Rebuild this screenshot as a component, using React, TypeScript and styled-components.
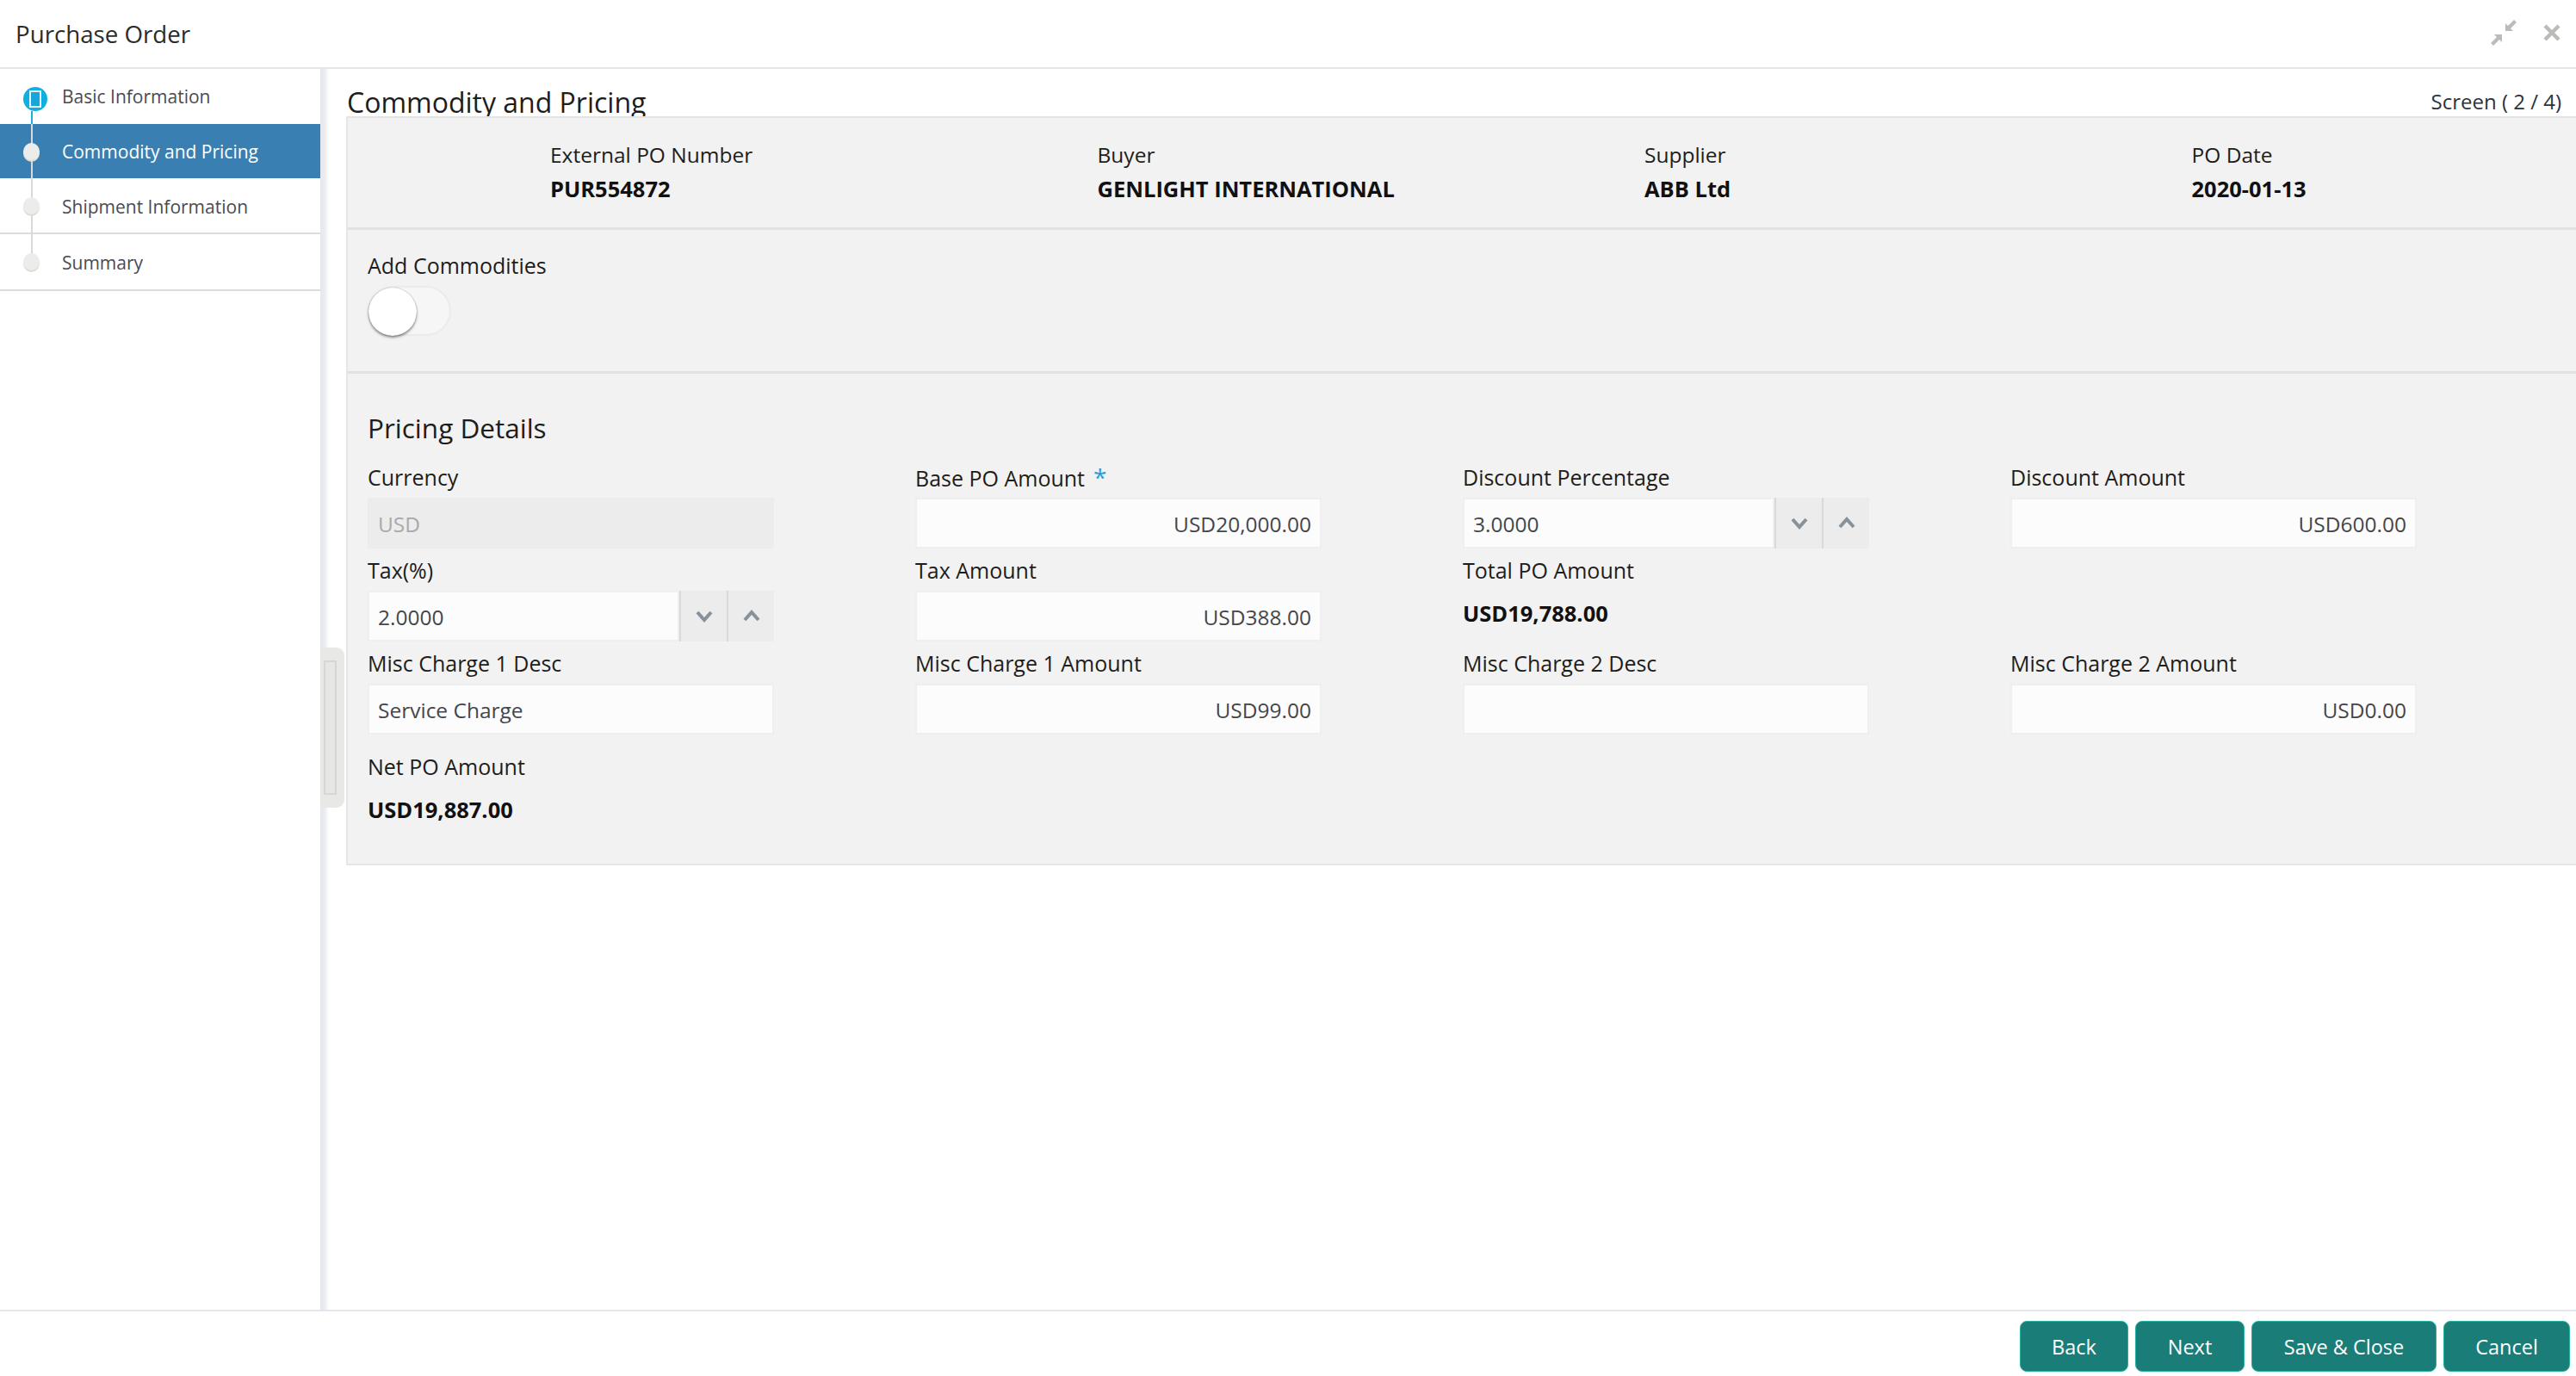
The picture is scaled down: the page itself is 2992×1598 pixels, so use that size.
import React from 'react';
import styled, { createGlobalStyle } from 'styled-components';

const GlobalStyle = createGlobalStyle`
  html, body {
    margin: 0;
    padding: 0;
    background: #fff;
  }
  body {
    font-family: "Open Sans", "Noto Sans", sans-serif;
    color: #1d1d1b;
  }
  * {
    box-sizing: border-box;
  }
`;

const Page = styled.div`
  width: 2992px;
  height: 1598px;
  display: flex;
  flex-direction: column;
  overflow: hidden;
`;

const TopBar = styled.header`
  height: 80px;
  flex: none;
  display: flex;
  align-items: center;
  justify-content: space-between;
  padding: 0 18px 0;
  border-bottom: 2px solid #e3e6ea;
`;

const PageTitle = styled.h1`
  margin: 0;
  font-size: 27.7px;
  font-weight: 400;
  color: #2c2c2a;
`;

const WindowIcons = styled.div`
  display: flex;
  align-items: center;
  gap: 30px;
  margin-top: -2px;
`;

const Body = styled.div`
  flex: 1;
  display: flex;
  min-height: 0;
`;

const Sidebar = styled.nav`
  width: 372px;
  flex: none;
`;

const StepRow = styled.div<{ $active?: boolean; $height: number; $bordered?: boolean }>`
  position: relative;
  height: ${(p) => p.$height}px;
  display: flex;
  align-items: center;
  padding-left: 72px;
  padding-top: ${(p) => (p.$bordered ? 2 : 0)}px;
  font-size: 21px;
  color: ${(p) => (p.$active ? '#fff' : '#4a4a52')};
  background: ${(p) => (p.$active ? '#3a7fb2' : 'transparent')};
  border-bottom: ${(p) => (p.$bordered ? '2px solid #dedcd8' : 'none')};
`;

const StepLine = styled.span<{ $top: number; $length: number; $current?: boolean }>`
  position: absolute;
  left: 36px;
  top: ${(p) => p.$top}px;
  width: 2px;
  height: ${(p) => p.$length}px;
  background: ${(p) => (p.$current ? '#1aafdc' : '#d9d9d7')};
`;

const StepDot = styled.span`
  position: absolute;
  left: 27px;
  top: 50%;
  width: 19px;
  height: 20px;
  margin-top: -10px;
  border-radius: 50%;
  background: #ececea;
  box-shadow: 0 2px 0 #dcdcda;
`;

const CurrentDot = styled.span`
  position: absolute;
  left: 27px;
  top: 21px;
  width: 28px;
  height: 28px;
  border-radius: 50%;
  background: #0fb0e0;
  display: flex;
  align-items: center;
  justify-content: center;

  &::after {
    content: '';
    width: 10px;
    height: 16px;
    background: #1aa5d8;
    border: 2px solid #e8f4f8;
  }
`;

const Splitter = styled.div`
  position: relative;
  width: 30px;
  flex: none;
  background: linear-gradient(to right, #e6e9ec 0, #e9ebed 5px, #fff 10px);
`;

const Handle = styled.div`
  position: absolute;
  left: 0;
  top: 672px;
  width: 28px;
  height: 186px;
  background: #e8e8e6;
  border-radius: 0 9px 9px 0;
  display: flex;
  align-items: center;
  justify-content: center;
  padding-right: 6px;

  &::after {
    content: '';
    width: 11px;
    height: 152px;
    background: #e6e6e4;
    border: 2px solid #d6d6d4;
  }
`;

const Main = styled.main`
  flex: 1;
  min-width: 0;
`;

const ContentHead = styled.div`
  height: 55px;
  display: flex;
  justify-content: space-between;
  padding: 17px 17px 0 1px;
  overflow: hidden;
`;

const ContentTitle = styled.h2`
  margin: 0;
  font-size: 32px;
  line-height: 44px;
  font-weight: 400;
  color: #1d1d1b;
`;

const ScreenCount = styled.span`
  font-size: 24px;
  line-height: 42px;
  color: #2a3340;
`;

const Panel = styled.section`
  height: 870px;
  background: #f2f2f2;
  border-top: 2px solid #e4e4e4;
  border-left: 2px solid #e6e6e6;
  border-bottom: 2px solid #e6e6e6;
`;

const InfoGrid = styled.div`
  height: 130px;
  padding: 23px 0 0 235px;
  display: grid;
  grid-template-columns: repeat(4, 635.5px);
  border-bottom: 3px solid #e1e1e1;
`;

const InfoLabel = styled.div`
  font-size: 24.5px;
  line-height: 40px;
`;

const InfoValue = styled.div`
  font-size: 25.5px;
  line-height: 38px;
  font-weight: 700;
  color: #111;
`;

const ToggleBlock = styled.div`
  height: 167px;
  padding: 21px 0 0 23px;
  border-bottom: 3px solid #e1e1e1;
`;

const ToggleLabel = styled.div`
  font-size: 25px;
  line-height: 40px;
`;

const ToggleTrack = styled.div`
  position: relative;
  margin-top: 4px;
  width: 97px;
  height: 58px;
  border-radius: 29px;
  background: #f6f6f6;
  border: 2px solid #ebebeb;
`;

const ToggleKnob = styled.div`
  position: absolute;
  left: -1px;
  top: 0;
  width: 56px;
  height: 56px;
  border-radius: 50%;
  background: #fff;
  box-shadow: 0 2px 3px rgba(0, 0, 0, 0.45), 0 0 1px rgba(0, 0, 0, 0.4);
`;

const PricingBlock = styled.div`
  padding: 41px 0 0 23px;
`;

const SectionTitle = styled.h3`
  margin: 0 0 13px;
  font-size: 31.5px;
  line-height: 44px;
  font-weight: 400;
  color: #1d1d1b;
`;

const FieldGrid = styled.div`
  display: grid;
  grid-template-columns: repeat(4, 636px);
  grid-auto-rows: 108px;
`;

const Field = styled.div<{ $tall?: boolean }>`
  width: 472px;
  ${(p) => (p.$tall ? 'margin-top: 12px;' : '')}
`;

const FieldLabel = styled.label`
  display: block;
  height: 46px;
  font-size: 25px;
  line-height: 44px;
  white-space: nowrap;
`;

const Required = styled.span`
  margin-left: 10px;
  color: #2a9fd6;
  font-size: 28px;
`;

const InputBox = styled.div<{ $align?: string; $disabled?: boolean }>`
  flex: 1;
  height: 59px;
  display: flex;
  align-items: center;
  justify-content: ${(p) => (p.$align === 'right' ? 'flex-end' : 'flex-start')};
  padding: 2px 10px 0;
  font-size: 24.5px;
  color: ${(p) => (p.$disabled ? '#a9a9ab' : '#44464c')};
  background: ${(p) => (p.$disabled ? '#ececec' : '#fcfcfc')};
  border: 2px solid ${(p) => (p.$disabled ? '#ececec' : '#efefef')};
`;

const SpinRow = styled.div`
  display: flex;
  height: 59px;
`;

const SpinButton = styled.div`
  width: 55px;
  flex: none;
  display: flex;
  align-items: center;
  justify-content: center;
  background: #ececec;
  border-left: 2px solid #d9d9d9;
`;

const PlainValue = styled.div`
  margin-top: 6px;
  font-size: 25.5px;
  font-weight: 700;
  line-height: 40px;
  color: #111;
`;

const FooterBar = styled.footer`
  height: 77px;
  flex: none;
  display: flex;
  justify-content: flex-end;
  gap: 8px;
  padding: 11px 7px 0 0;
  border-top: 2px solid #e3e6ea;
`;

const ActionButton = styled.button<{ $width: number }>`
  width: ${(p) => p.$width}px;
  height: 59px;
  padding: 0;
  font-family: inherit;
  font-size: 23.5px;
  color: #fff;
  background: #1b7d78;
  border: 1px solid #24b3a3;
  border-radius: 8px;
`;

const Chevron = ({ up }: { up?: boolean }) => (
  <svg width="22" height="22" viewBox="0 0 22 22">
    <path
      d={up ? 'M3 15 L11 6 L19 15' : 'M3 6 L11 15 L19 6'}
      fill="none"
      stroke="#87919a"
      strokeWidth="4"
    />
  </svg>
);

const CompressIcon = () => (
  <svg width="32" height="32" viewBox="0 0 32 32">
    <path d="M18 14 L18 5 L21 8 L28 1 L31 4 L24 11 L27 14 Z" fill="#bdbbb7" />
    <path d="M14 18 L14 27 L11 24 L4 31 L1 28 L8 21 L5 18 Z" fill="#bdbbb7" />
  </svg>
);

const CloseIcon = () => (
  <svg width="20" height="20" viewBox="0 0 20 20">
    <path d="M2 2 L18 18 M18 2 L2 18" stroke="#bdbbb7" strokeWidth="4.5" fill="none" />
  </svg>
);

const infoItems = [
  { label: 'External PO Number', value: 'PUR554872' },
  { label: 'Buyer', value: 'GENLIGHT INTERNATIONAL' },
  { label: 'Supplier', value: 'ABB Ltd' },
  { label: 'PO Date', value: '2020-01-13' },
];

const Spinner = ({ value }: { value: string }) => (
  <SpinRow>
    <InputBox>{value}</InputBox>
    <SpinButton>
      <Chevron />
    </SpinButton>
    <SpinButton>
      <Chevron up />
    </SpinButton>
  </SpinRow>
);

const App: React.FC = () => {
  return (
    <Page>
      <GlobalStyle />
      <TopBar>
        <PageTitle>Purchase Order</PageTitle>
        <WindowIcons>
          <CompressIcon />
          <CloseIcon />
        </WindowIcons>
      </TopBar>
      <Body>
        <Sidebar>
          <StepRow $height={64}>
            <CurrentDot />
            <StepLine $top={49} $length={15} $current />
            Basic Information
          </StepRow>
          <StepRow $height={63} $active>
            <StepLine $top={0} $length={63} />
            <StepDot />
            Commodity and Pricing
          </StepRow>
          <StepRow $height={65} $bordered>
            <StepLine $top={0} $length={65} />
            <StepDot />
            Shipment Information
          </StepRow>
          <StepRow $height={66} $bordered>
            <StepLine $top={0} $length={30} />
            <StepDot />
            Summary
          </StepRow>
        </Sidebar>
        <Splitter>
          <Handle />
        </Splitter>
        <Main>
          <ContentHead>
            <ContentTitle>Commodity and Pricing</ContentTitle>
            <ScreenCount>Screen ( 2 / 4)</ScreenCount>
          </ContentHead>
          <Panel>
            <InfoGrid>
              {infoItems.map((item) => (
                <div key={item.label}>
                  <InfoLabel>{item.label}</InfoLabel>
                  <InfoValue>{item.value}</InfoValue>
                </div>
              ))}
            </InfoGrid>
            <ToggleBlock>
              <ToggleLabel>Add Commodities</ToggleLabel>
              <ToggleTrack>
                <ToggleKnob />
              </ToggleTrack>
            </ToggleBlock>
            <PricingBlock>
              <SectionTitle>Pricing Details</SectionTitle>
              <FieldGrid>
                <Field>
                  <FieldLabel>Currency</FieldLabel>
                  <InputBox $disabled>USD</InputBox>
                </Field>
                <Field>
                  <FieldLabel>
                    Base PO Amount<Required>*</Required>
                  </FieldLabel>
                  <InputBox $align="right">USD20,000.00</InputBox>
                </Field>
                <Field>
                  <FieldLabel>Discount Percentage</FieldLabel>
                  <Spinner value="3.0000" />
                </Field>
                <Field>
                  <FieldLabel>Discount Amount</FieldLabel>
                  <InputBox $align="right">USD600.00</InputBox>
                </Field>

                <Field>
                  <FieldLabel>Tax(%)</FieldLabel>
                  <Spinner value="2.0000" />
                </Field>
                <Field>
                  <FieldLabel>Tax Amount</FieldLabel>
                  <InputBox $align="right">USD388.00</InputBox>
                </Field>
                <Field>
                  <FieldLabel>Total PO Amount</FieldLabel>
                  <PlainValue>USD19,788.00</PlainValue>
                </Field>
                <div />

                <Field>
                  <FieldLabel>Misc Charge 1 Desc</FieldLabel>
                  <InputBox>Service Charge</InputBox>
                </Field>
                <Field>
                  <FieldLabel>Misc Charge 1 Amount</FieldLabel>
                  <InputBox $align="right">USD99.00</InputBox>
                </Field>
                <Field>
                  <FieldLabel>Misc Charge 2 Desc</FieldLabel>
                  <InputBox />
                </Field>
                <Field>
                  <FieldLabel>Misc Charge 2 Amount</FieldLabel>
                  <InputBox $align="right">USD0.00</InputBox>
                </Field>

                <Field $tall>
                  <FieldLabel>Net PO Amount</FieldLabel>
                  <PlainValue>USD19,887.00</PlainValue>
                </Field>
              </FieldGrid>
            </PricingBlock>
          </Panel>
        </Main>
      </Body>
      <FooterBar>
        <ActionButton $width={126}>Back</ActionButton>
        <ActionButton $width={127}>Next</ActionButton>
        <ActionButton $width={215}>Save &amp; Close</ActionButton>
        <ActionButton $width={147}>Cancel</ActionButton>
      </FooterBar>
    </Page>
  );
};

export default App;
